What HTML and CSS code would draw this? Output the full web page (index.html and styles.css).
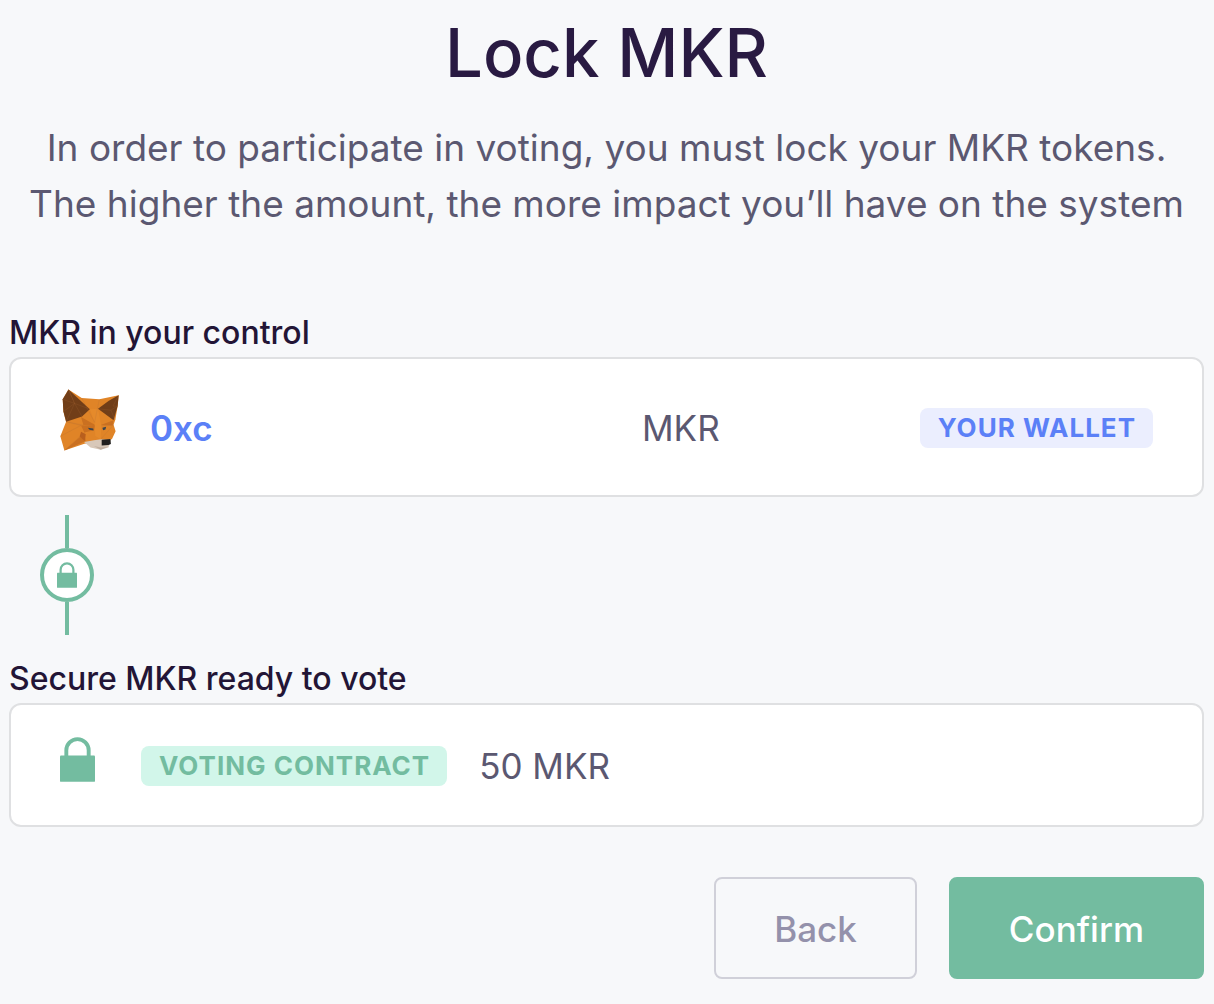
FILE: index.html
```html
<!DOCTYPE html>
<html lang="en">
<head>
<meta charset="utf-8">
<meta name="viewport" content="width=device-width, initial-scale=1">
<title>Lock MKR</title>
<link rel="stylesheet" href="styles.css">
</head>
<body>
<main class="page">
  <header class="intro">
    <h1 class="title">Lock MKR</h1>
    <p class="lead">In order to participate in voting, you must lock your MKR tokens.<br>The higher the amount, the more impact you’ll have on the system</p>
  </header>

  <section class="group">
    <h2 class="label">MKR in your control</h2>
    <div class="card card-wallet">
      <svg class="fox" viewBox="32 30 174 182" aria-hidden="true">
        <path fill="#e08427" d="M57 31 96 56 148 60 205 48 202 80 195 121 190 135 196 154 185 178 152 183 104 191 45 211 33 169 50 126 42 96 40 60Z"/>
        <path fill="#713e18" d="M57 31 120 89 97 111 50 126 42 96 40 60Z"/>
        <path fill="#713e18" d="M205 48 202 80 190 122 144 88 176 64Z"/>
        <path fill="#ca7020" d="M94 112 136 136 101 136ZM136 136 94 137 104 158 132 151ZM45 211 104 160 108 183ZM152 136 190 122 187 137Z"/>
        <path fill="#b95f1d" d="M94 156 108 163 105 183 90 170Z"/>
        <path fill="#e58a2b" d="M120 89 144 88 154 138 152 178 136 168 134 128Z"/>
        <path fill="#d8c8b9" d="M103 186 132 181 154 178 182 180 175 202 152 209 122 202Z"/>
        <path fill="#c1afa1" d="M132 198 153 202 174 200 152 209Z"/>
        <path fill="#22201f" d="M155 179 181 177 182 192 175 195 155 196Z"/>
        <path fill="#3c444c" d="M114 144 130 146 131 152 119 150ZM157 144 168 141 166 149 159 151Z"/>
        <path fill="none" stroke="#a86a37" stroke-width="1" opacity=".6" d="M40 60 75 72 57 31 75 72 42 96M97 111 75 72 120 89M50 126 75 72M205 48 188 80 202 80 182 92 195 121M144 88 182 92M33 169 94 137 50 126 101 136M45 211 104 158M148 60 134 128 96 56M154 138 190 135 152 178"/>
      </svg>
      <a class="address" href="#wallet">0xc</a>
      <span class="amount">MKR</span>
      <span class="badge badge-wallet">YOUR WALLET</span>
    </div>
  </section>

  <div class="connector">
    <span class="connector-ring">
      <svg class="lock-small" viewBox="0 0 36 46" aria-hidden="true">
        <rect x="0" y="19" width="36" height="27" rx="1"/>
        <path d="M6.500 20V13.500a11.500 11.500 0 0 1 23 0V20"/>
      </svg>
    </span>
  </div>

  <section class="group">
    <h2 class="label">Secure MKR ready to vote</h2>
    <div class="card card-contract">
      <svg class="lock" viewBox="0 0 36 46" aria-hidden="true">
        <rect x="0" y="19" width="36" height="27" rx="1"/>
        <path d="M6.500 20V13.500a11.500 11.500 0 0 1 23 0V20"/>
      </svg>
      <span class="badge badge-contract">VOTING CONTRACT</span>
      <span class="amount">50 MKR</span>
    </div>
  </section>

  <div class="actions">
    <button class="button button-back" type="button">Back</button>
    <button class="button button-confirm" type="button">Confirm</button>
  </div>
</main>
</body>
</html>
```
FILE: styles.css
```css
* {
  box-sizing: border-box;
}

body {
  margin: 0;
  background: #f7f8fa;
  color: #231536;
  font-family: Inter, "Liberation Sans", sans-serif;
}

.page {
  padding: 8px 10px 24px 9px;
}

.intro {
  text-align: center;
}

.title {
  margin: 0;
  color: #291a42;
  font-size: 67px;
  font-weight: 500;
  line-height: 90px;
}

.lead {
  margin: 22px 0 0;
  color: #5b5871;
  font-size: 37px;
  line-height: 56px;
}

.intro + .group {
  margin-top: 80px;
}

.label {
  margin: 0 0 4px;
  font-size: 32px;
  font-weight: 500;
  line-height: 41px;
}

.card {
  display: flex;
  align-items: center;
  background: #fff;
  border: 2px solid #dfe0e2;
  border-radius: 12px;
  padding: 2px 49px 0;
}

.card-wallet {
  height: 140px;
}

.card-contract {
  height: 124px;
}

.fox {
  width: 59px;
  height: 62px;
  margin-bottom: 16px;
}

.address {
  width: 492px;
  margin-left: 31px;
  color: #5b80f7;
  font-size: 35px;
  font-weight: 600;
  text-decoration: none;
}

.amount {
  color: #5b5871;
  font-size: 35px;
}

.badge {
  border-radius: 8px;
  padding: 0 17px 0 18px;
  font-size: 26px;
  font-weight: 700;
  letter-spacing: 1px;
  line-height: 40px;
}

.badge-wallet {
  margin-left: auto;
  background: #ebeefe;
  color: #5b80f7;
}

.badge-contract {
  margin: 0 32px 0 46px;
  background: #d2f6ea;
  color: #73bca0;
}

.lock,
.lock-small {
  fill: #73bca0;
}

.lock path,
.lock-small path {
  fill: none;
  stroke: #73bca0;
  stroke-width: 4;
}

.lock {
  width: 35px;
  height: 45px;
  margin-bottom: 14px;
}

.lock-small {
  width: 20px;
  height: 26px;
}

.connector {
  display: flex;
  flex-direction: column;
  align-items: center;
  width: 54px;
  margin: 18px 0 23px 31px;
}

.connector::before,
.connector::after {
  content: "";
  width: 4px;
  height: 33px;
  background: #73bca0;
}

.connector-ring {
  display: flex;
  align-items: center;
  justify-content: center;
  width: 54px;
  height: 54px;
  background: #fff;
  border: 4px solid #73bca0;
  border-radius: 50%;
}

.actions {
  display: flex;
  justify-content: flex-end;
  gap: 32px;
  margin-top: 50px;
}

.button {
  height: 102px;
  border: 2px solid #d0d0d9;
  border-radius: 8px;
  padding: 2px 58px 0;
  font-family: inherit;
  font-size: 35px;
  font-weight: 500;
}

.button-back {
  background: transparent;
  color: #9491ab;
}

.button-confirm {
  background: #73bca0;
  border-color: #73bca0;
  color: #fff;
}
```
